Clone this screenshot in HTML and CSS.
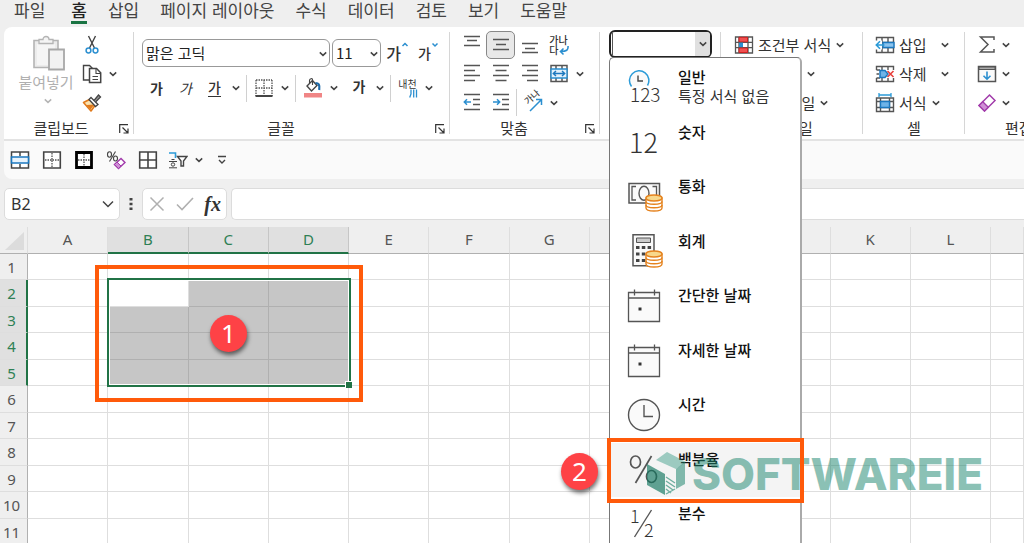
FILE: index.html
```html
<!DOCTYPE html>
<html lang="ko">
<head>
<meta charset="utf-8">
<meta name="viewport" content="width=device-width, initial-scale=1">
<title>통합 문서</title>
<link rel="stylesheet" href="styles.css">
</head>
<body>
<svg class="defs" aria-hidden="true">
  <symbol id="chev" viewBox="0 0 10 10"><path d="M1.8 3.4 5 6.4 8.2 3.4" fill="none" stroke="currentColor" stroke-width="1.5"/></symbol>
  <symbol id="launch" viewBox="0 0 10 10"><path d="M.7 9V.7H9M3.5 3.5 8.5 8.500M9 4.500V9H4.500" fill="none" stroke="currentColor" stroke-width="1.200"/></symbol>
  <symbol id="coins" viewBox="0 0 18 18"><path d="M1 4v10c0 4 16 4 16 0V4z" fill="#fff" stroke="#e5831f" stroke-width="1.400"/><path d="M1 7.500c0 3.700 16 3.700 16 0M1 11c0 3.700 16 3.700 16 0" fill="none" stroke="#e5831f" stroke-width="1.400"/><ellipse cx="9" cy="4" rx="8" ry="3" fill="#f8d88c" stroke="#e5831f" stroke-width="1.400"/></symbol>
  <symbol id="calendar" viewBox="0 0 34 36"><path d="M1.500 4.500h31v29h-31z" fill="#fafafa" stroke="#555" stroke-width="1.300"/><path d="M1.500 10h31M7.500 1.500v6M27.500 1.500v6" stroke="#555" stroke-width="1.300"/><path d="M11.500 19.500h3v3h-3z" fill="#333"/></symbol>
</svg>

<nav class="tabs">
  <button class="tab tab-file">파일</button>
  <button class="tab tab-active">홈</button>
  <button class="tab">삽입</button>
  <button class="tab">페이지 레이아웃</button>
  <button class="tab">수식</button>
  <button class="tab">데이터</button>
  <button class="tab">검토</button>
  <button class="tab">보기</button>
  <button class="tab">도움말</button>
</nav>

<header class="ribbon">
  <section class="group group-clip">
    <div class="clip-body">
      <button class="paste" disabled>
        <svg width="34" height="36" viewBox="0 0 34 36"><path d="M2 5.500h24v27H2z" fill="#ececec" stroke="#b4b4b4" stroke-width="1.600"/><path d="M5 9h18v21H5z" fill="#f5f5f5"/><path d="M7 8.500v-4h4c0-4 6-4 6 0h4v4z" fill="#f4f4f4" stroke="#b4b4b4" stroke-width="1.300"/><path d="M17 14.500h15v20H17z" fill="#f2f2f2" stroke="#a8a8a8" stroke-width="1.800"/></svg>
        <span>붙여넣기</span>
        <svg class="chev"><use href="#chev"/></svg>
      </button>
      <div class="rows">
        <div class="row">
          <button class="icon" aria-label="잘라내기"><svg width="20" height="20" viewBox="0 0 20 20"><path d="M6.500 1l6 12M13.500 1l-6 12" stroke="#444" stroke-width="1.400" fill="none"/><circle cx="6.500" cy="15.500" r="2.400" fill="none" stroke="#2b8fd0" stroke-width="1.500"/><circle cx="13.500" cy="15.500" r="2.400" fill="none" stroke="#2b8fd0" stroke-width="1.500"/></svg></button>
        </div>
        <div class="row">
          <button class="icon" aria-label="복사"><svg width="20" height="20" viewBox="0 0 20 20"><path d="M7 16H1.500V1.500h6l3 3" fill="none" stroke="#444" stroke-width="1.400"/><path d="M7.500 4.500h7l4.200 4.200v9.800H7.500z" fill="#fff" stroke="#444" stroke-width="1.500"/><path d="M14 4.500v5h5M10.500 12.500h5.500M10.500 15.500h5.500" fill="none" stroke="#444" stroke-width="1.100"/></svg></button>
          <button class="drop" aria-label="복사 옵션"><svg class="chev"><use href="#chev"/></svg></button>
        </div>
        <div class="row">
          <button class="icon" aria-label="서식 복사"><svg width="20" height="20" viewBox="0 0 20 20"><path d="M7.500 6.500 1.500 9.500l7.500 8.500 4-5.500z" fill="#fbe3b0" stroke="#e07a1c" stroke-width="1.600" stroke-linejoin="round"/><path d="M4.500 12l8-.5-4 5z" fill="#e07a1c"/><path d="M7 6.500l2-2 7 7-2.500 2z" fill="#fff" stroke="#444" stroke-width="1.300"/><path d="M12 7.500l4.500-5.500 2 2-5 5" fill="#999" stroke="#444" stroke-width="1.300"/></svg></button>
        </div>
      </div>
    </div>
    <footer class="caption">클립보드<button class="launcher" aria-label="클립보드 옵션"><svg width="10" height="10"><use href="#launch"/></svg></button></footer>
  </section>

  <section class="group group-font">
    <div class="font-body">
      <div class="row font-row">
        <label class="combo combo-font"><select aria-label="글꼴"><option>맑은 고딕</option></select><svg class="chev"><use href="#chev"/></svg></label>
        <label class="combo combo-size"><select aria-label="글꼴 크기"><option>11</option></select><svg class="chev"><use href="#chev"/></svg></label>
        <button class="icon glyph glyph-large" aria-label="글꼴 크게">가<svg width="8" height="12" viewBox="0 0 8 12"><path d="M1.500 5 4 2.500 6.500 5" fill="none" stroke="#2b8fd0" stroke-width="1.500"/></svg></button>
        <button class="icon glyph" aria-label="글꼴 작게">가<svg width="8" height="12" viewBox="0 0 8 12"><path d="M1.500 2.500 4 5 6.500 2.500" fill="none" stroke="#2b8fd0" stroke-width="1.500"/></svg></button>
      </div>
      <div class="row font-row">
        <button class="icon glyph bold" aria-label="굵게">가</button>
        <button class="icon glyph italic" aria-label="기울임꼴">가</button>
        <button class="icon glyph" aria-label="밑줄"><span class="underlined">가</span></button>
        <button class="drop" aria-label="밑줄 옵션"><svg class="chev"><use href="#chev"/></svg></button>
        <i class="sep"></i>
        <button class="icon" aria-label="테두리"><svg width="20" height="20" viewBox="0 0 20 20"><path d="M2 2h16M2 2v16M18 2v16M10 2v16M2 10h16" fill="none" stroke="#555" stroke-width="1.300" stroke-dasharray="1.500 1"/><path d="M1.500 18h17" stroke="#444" stroke-width="2"/></svg></button>
        <button class="drop" aria-label="테두리 옵션"><svg class="chev"><use href="#chev"/></svg></button>
        <i class="sep"></i>
        <button class="icon" aria-label="채우기 색"><svg width="20" height="20" viewBox="0 0 20 20"><path d="M9.500 2.500 4 8l4.500 5L14 7.500z" fill="#fff" stroke="#444" stroke-width="1.400"/><path d="M9.500 7V1.500c0-1.500-3-1-3 1V5" fill="none" stroke="#444" stroke-width="1.100"/><path d="M12.500 5c3 0 4.500 1.500 3.700 7" fill="none" stroke="#1c69a8" stroke-width="2.200"/><path d="M1 15h18v4.500H1z" fill="#f08585"/></svg></button>
        <button class="drop" aria-label="채우기 색 옵션"><svg class="chev"><use href="#chev"/></svg></button>
        <button class="icon glyph bold color-glyph" aria-label="글꼴 색">가</button>
        <button class="drop" aria-label="글꼴 색 옵션"><svg class="chev"><use href="#chev"/></svg></button>
        <i class="sep"></i>
        <button class="icon ruby" aria-label="윗주 필드"><span>내천</span><svg width="9" height="9" viewBox="0 0 9 9"><path d="M2 .5V5L.7 8.500M4.700.5v8M7.500.5v8" fill="none" stroke="#2b8fd0" stroke-width="1.300"/></svg></button>
        <button class="drop" aria-label="윗주 옵션"><svg class="chev"><use href="#chev"/></svg></button>
      </div>
    </div>
    <footer class="caption">글꼴<button class="launcher" aria-label="글꼴 옵션"><svg width="10" height="10"><use href="#launch"/></svg></button></footer>
  </section>

  <section class="group group-align">
    <div class="rows">
      <div class="row">
        <button class="icon" aria-label="위쪽 맞춤"><svg class="line" width="20" height="24" viewBox="0 0 20 24"><path d="M2 3.500h16M5 7.500h10M2 12.500h16"/></svg></button>
        <button class="icon pressed" aria-label="가운데 맞춤"><svg class="line" width="20" height="24" viewBox="0 0 20 24"><path d="M2 6.500h16M5 11.500h10M2 16.500h16"/></svg></button>
        <button class="icon" aria-label="아래쪽 맞춤"><svg class="line" width="20" height="24" viewBox="0 0 20 24"><path d="M2 10.500h16M5 15.500h10M2 19.500h16"/></svg></button>
        <button class="icon wrap" aria-label="자동 줄 바꿈"><span>가나<br>다</span><svg width="10" height="10" viewBox="0 0 10 10"><path d="M9 0c.5 4-1.500 5.500-7 5.500M4.500 2.500l-3 3 3 3" fill="none" stroke="#2b8fd0" stroke-width="1.600"/></svg></button>
      </div>
      <div class="row">
        <button class="icon" aria-label="왼쪽 맞춤"><svg class="line" width="20" height="20" viewBox="0 0 20 20"><path d="M2 1.500h16M2 6.500h11M2 11.500h16M2 16.500h11"/></svg></button>
        <button class="icon" aria-label="가운데 맞춤"><svg class="line" width="20" height="20" viewBox="0 0 20 20"><path d="M2 1.500h16M4.500 6.500h11M2 11.500h16M4.500 16.500h11"/></svg></button>
        <button class="icon" aria-label="오른쪽 맞춤"><svg class="line" width="20" height="20" viewBox="0 0 20 20"><path d="M2 1.500h16M7 6.500h11M2 11.500h16M7 16.500h11"/></svg></button>
        <button class="icon" aria-label="병합하고 가운데 맞춤"><svg width="20" height="20" viewBox="0 0 20 20"><path d="M2 1.500h16v16H2zM7 2v4M13 2v4M7 14v3M13 14v3" fill="none" stroke="#555" stroke-width="1.500"/><path d="M2 5h16v9H2z" fill="#e3f1fb" stroke="#2b8fd0" stroke-width="1.400"/><path d="M4.500 9.500h11M7 7 4.300 9.500 7 12M13 7l2.700 2.500L13 12" fill="none" stroke="#1c78be" stroke-width="1.400"/></svg></button>
        <button class="drop" aria-label="병합 옵션"><svg class="chev"><use href="#chev"/></svg></button>
      </div>
      <div class="row">
        <button class="icon" aria-label="내어쓰기"><svg class="line" width="20" height="20" viewBox="0 0 20 20"><path d="M2 1.500h16M11 6.500h7M11 11.500h7M2 16.500h16"/><path class="blue" d="M9 9H2.500M5 6.300 2.300 9 5 11.700"/></svg></button>
        <button class="icon" aria-label="들여쓰기"><svg class="line" width="20" height="20" viewBox="0 0 20 20"><path d="M2 1.500h16M11 6.500h7M11 11.500h7M2 16.500h16"/><path class="blue" d="M2 9h6.500M6 6.300 8.700 9 6 11.700"/></svg></button>
        <i class="sep sep-thin"></i>
        <button class="icon" aria-label="방향"><svg class="spill" width="22" height="20" viewBox="0 0 22 20"><text class="tilt" transform="translate(6 12) rotate(-42)">가나</text><path d="M8 18 19 7M14 6.500h5.500V12" fill="none" stroke="#2b8fd0" stroke-width="1.500"/></svg></button>
        <button class="drop" aria-label="방향 옵션"><svg class="chev"><use href="#chev"/></svg></button>
      </div>
    </div>
    <footer class="caption">맞춤<button class="launcher" aria-label="맞춤 옵션"><svg width="10" height="10"><use href="#launch"/></svg></button></footer>
  </section>

  <section class="group group-number">
    <div class="format">
      <input class="format-input" aria-label="표시 형식" type="text">
      <button class="format-drop" aria-label="표시 형식 목록"><svg class="chev"><use href="#chev"/></svg></button>
      <div class="menu">
        <button class="item"><svg width="36" height="36" viewBox="0 0 36 36"><path d="M4.500 16.500a9.700 9.700 0 1 1 16-1" fill="#fafafa" stroke="#2b9bd8" stroke-width="1.500"/><path d="M11 5.500v5.500h5" fill="none" stroke="#444" stroke-width="1.400"/><text class="num-small" x="3" y="32">123</text></svg><span><b>일반</b>특정 서식 없음</span></button>
        <button class="item"><svg width="36" height="36" viewBox="0 0 36 36"><text class="num-big" x="2" y="28">12</text></svg><span><b>숫자</b></span></button>
        <button class="item"><svg width="36" height="36" viewBox="0 0 36 36"><path d="M2 4.500h30.500v19.500H2z" fill="#fafafa" stroke="#555" stroke-width="1.500"/><path d="M9 7.500H5v13.500h4M25.500 7.500h4V17" fill="none" stroke="#555" stroke-width="1.300"/><ellipse cx="17" cy="14.300" rx="5" ry="7" fill="none" stroke="#555" stroke-width="1.400"/><use href="#coins" x="18" y="15" width="18" height="18"/></svg><span><b>통화</b></span></button>
        <button class="item"><svg width="36" height="36" viewBox="0 0 36 36"><path d="M6 .8h21v31H6z" fill="#fafafa" stroke="#555" stroke-width="1.500"/><path d="M9.500 4h14v4.500h-14z" fill="#ccc" stroke="#555"/><path d="M9 12h3.500v3H9zM14.800 12h3.500v3h-3.500zM20.600 12h3.500v3h-3.500zM9 18.500h3.500v3H9zM14.800 18.500h3.500v3h-3.500zM9 25h3.500v3H9zM14.800 25h3.500v3h-3.500z" fill="#444"/><use href="#coins" x="18" y="16" width="18" height="18"/></svg><span><b>회계</b></span></button>
        <button class="item"><svg width="36" height="36"><use href="#calendar" width="34" height="36"/></svg><span><b>간단한 날짜</b></span></button>
        <button class="item"><svg width="36" height="36"><use href="#calendar" width="34" height="36"/></svg><span><b>자세한 날짜</b></span></button>
        <button class="item"><svg width="36" height="36" viewBox="0 0 36 36"><circle cx="17" cy="18" r="15.500" fill="#fafafa" stroke="#555" stroke-width="1.400"/><path d="M17 8v11.500h9" fill="none" stroke="#555" stroke-width="1.400"/></svg><span><b>시간</b></span></button>
        <button class="item item-hover"><svg width="36" height="36" viewBox="0 0 36 36"><ellipse cx="8.500" cy="10" rx="5" ry="6" fill="none" stroke="#555" stroke-width="1.700"/><ellipse cx="24.500" cy="24.500" rx="5" ry="6" fill="none" stroke="#555" stroke-width="1.700"/><path d="M24.500 4 8.500 31" stroke="#555" stroke-width="1.700"/></svg><span><b>백분율</b></span></button>
        <button class="item"><svg width="36" height="36" viewBox="0 0 36 36"><path d="M24.500 4 7.500 31" stroke="#555" stroke-width="1.400"/><text class="num-frac" x="3" y="17">1</text><text class="num-frac" x="17" y="31">2</text></svg><span><b>분수</b></span></button>
      </div>
    </div>
    <footer class="caption">표시 형식</footer>
  </section>

  <section class="group group-style">
    <div class="rows">
      <button class="row command"><svg width="20" height="20" viewBox="0 0 20 20"><path d="M1.500 2h17v16h-17zM1.500 7.300h17M1.500 12.600h17M5 2v16M14 2v16" fill="#fff" stroke="#555" stroke-width="1.300"/><path d="M5 2.300h8.500v4.500H5zM5 13h8.500v4.500H5z" fill="#f05050" stroke="#d02020"/><path d="M5 7.600h4v4.500H5z" fill="#2b8fd0"/></svg>조건부 서식<svg class="chev"><use href="#chev"/></svg></button>
      <button class="row command command-table">표 서식<svg class="chev"><use href="#chev"/></svg></button>
      <button class="row command command-cell">셀 스타일<svg class="chev"><use href="#chev"/></svg></button>
    </div>
    <footer class="caption">스타일</footer>
  </section>

  <section class="group group-cell">
    <div class="rows">
      <div class="row"><button class="command"><svg width="20" height="20" viewBox="0 0 20 20"><path d="M1.500 2.500h17v15h-17zM1.500 7.500h17M1.500 12.500h17M7 2.500v15M13 2.500v15" fill="#fff" stroke="#555" stroke-width="1.400"/><path d="M8 7.500h11v5H8z" fill="#8cc4ee" stroke="#1c78be" stroke-width="1.400"/><path d="M0 5.500h7v9H0z" fill="#fff"/><path d="M9.500 10H1.500M5 6.300 1.300 10 5 13.700" fill="none" stroke="#2b9bd8" stroke-width="1.600"/></svg>삽입</button><button class="drop drop-wide" aria-label="삽입 옵션"><svg class="chev"><use href="#chev"/></svg></button></div>
      <div class="row"><button class="command"><svg width="20" height="20" viewBox="0 0 20 20"><path d="M1.500 6V2.500h17V6M7 2.500V6M13 2.500V6M1.500 14v3.500h17V14M7 14v3.500M13 14v3.500M1.500 6H5M1.500 14H5M1.500 10H4" fill="none" stroke="#555" stroke-width="1.400"/><path d="M5 6.500h5l3 3.500-3 3.500H5z" fill="#6fb4e8" stroke="#1c78be" stroke-width="1.500"/><path d="M12.500 7l6 6M18.500 7l-6 6" stroke="#e8403c" stroke-width="1.600"/></svg>삭제</button><button class="drop drop-wide" aria-label="삭제 옵션"><svg class="chev"><use href="#chev"/></svg></button></div>
      <div class="row"><button class="command"><svg width="20" height="20" viewBox="0 0 20 20"><path d="M1.500 5h17v13.500h-17zM1.500 8.500h17M1.500 14.500h17M5.500 5v13.500M14.500 5v13.500" fill="#fff" stroke="#555" stroke-width="1.400"/><path d="M5.500 8.500h9v6h-9z" fill="#6fb4e8" stroke="#1c78be" stroke-width="1.400"/><path d="M4 2h12M4 0v4M16 0v4" stroke="#2b9bd8" stroke-width="1.300"/></svg>서식<svg class="chev"><use href="#chev"/></svg></button></div>
    </div>
    <footer class="caption">셀</footer>
  </section>

  <section class="group group-edit">
    <div class="rows">
      <button class="row command" aria-label="합계"><svg width="20" height="20" viewBox="0 0 20 20"><path d="M17 5V2H3.500L11 9.500 3.500 17H17v-3" fill="none" stroke="#555" stroke-width="1.500"/></svg><svg class="chev"><use href="#chev"/></svg></button>
      <button class="row command" aria-label="채우기"><svg width="20" height="20" viewBox="0 0 20 20"><path d="M1.500 2.500h17v15h-17z" fill="#fafafa" stroke="#555" stroke-width="1.500"/><path d="M2 3h16v2.500H2z" fill="#aaa" stroke="#555"/><path d="M10 7.500V15M6.500 11.700 10 15.200l3.500-3.500" fill="none" stroke="#2b8fd0" stroke-width="1.600"/></svg><svg class="chev"><use href="#chev"/></svg></button>
      <button class="row command" aria-label="지우기"><svg width="20" height="20" viewBox="0 0 20 20"><path d="M12.500 2 18 7.500 7.500 18 2 12.500z" fill="#fff" stroke="#a23cab" stroke-width="1.500"/><path d="M5.800 8.700l5.500 5.500L7.500 18 2 12.500z" fill="#cf8fd6" stroke="#a23cab" stroke-width="1.300"/></svg><svg class="chev"><use href="#chev"/></svg></button>
    </div>
    <footer class="caption">편집</footer>
  </section>
</header>

<div class="quick">
  <button class="quick-btn" aria-label="병합"><svg width="20" height="20" viewBox="0 0 20 20"><path d="M1.500 2h17v16h-17zM10 2v4M10 14v4" fill="#fff" stroke="#444" stroke-width="1.500"/><path d="M1.500 7h17v6h-17z" fill="#e8f3fc" stroke="#1c78be" stroke-width="1.600"/></svg></button>
  <button class="quick-btn" aria-label="바깥쪽 테두리"><svg width="20" height="20" viewBox="0 0 20 20"><path d="M1.700 2h16.600v16H1.700z" fill="#fff" stroke="#444" stroke-width="1.600"/><path d="M10 3v14M3 10h14" stroke="#555" stroke-width="1.300" stroke-dasharray="1.500 1"/></svg></button>
  <button class="quick-btn" aria-label="굵은 바깥쪽 테두리"><svg width="20" height="20" viewBox="0 0 20 20"><path d="M2.500 2.500h15v15h-15z" fill="#fff" stroke="#000" stroke-width="2.800"/><path d="M10 4v12M4 10h12" stroke="#555" stroke-width="1.300" stroke-dasharray="1.500 1"/></svg></button>
  <button class="quick-btn" aria-label="서식 지우기"><svg width="20" height="20" viewBox="0 0 20 20"><ellipse cx="3.500" cy="4.500" rx="2" ry="2.700" fill="none" stroke="#444" stroke-width="1.100"/><ellipse cx="9.500" cy="8.500" rx="2" ry="2.500" fill="none" stroke="#444" stroke-width="1.100"/><path d="M9.500 1.500 3.500 11.500" stroke="#444" stroke-width="1.100"/><path d="M15 8.500l4 4-6.500 6-4-4z" fill="#fff" stroke="#a23cab" stroke-width="1.500"/><path d="M11 12l4 4-2.500 2.500-4-4z" fill="#cf8fd6" stroke="#a23cab"/></svg></button>
  <button class="quick-btn" aria-label="모든 테두리"><svg width="20" height="20" viewBox="0 0 20 20"><path d="M1.700 2h16.600v16H1.700zM10 2v16M1.700 10h16.600" fill="#fff" stroke="#444" stroke-width="1.600"/></svg></button>
  <button class="quick-btn quick-filter" aria-label="필터"><svg width="20" height="20" viewBox="0 0 20 20"><path d="M1 3h6.500v5" fill="none" stroke="#2b9bd8" stroke-width="1.600"/><path d="M9.500 6.500h9.500l-3.500 4.500v5h-2.500v-5z" fill="#fff" stroke="#444" stroke-width="1.400"/><path d="M3.500 9.500h3M1 11.500h8M1 17.800h8" stroke="#444" stroke-width="1"/><circle cx="5" cy="14.500" r="1.700" fill="none" stroke="#444"/></svg></button>
  <button class="drop" aria-label="필터 옵션"><svg class="chev"><use href="#chev"/></svg></button>
  <button class="quick-btn" aria-label="빠른 실행 도구 모음 사용자 지정"><svg width="10" height="10" viewBox="0 0 10 10"><path d="M1 1.500h8M2 5l3 3 3-3" fill="none" stroke="#444" stroke-width="1.400"/></svg></button>
</div>

<div class="formula">
  <div class="namebox"><input aria-label="이름 상자" type="text" value="B2"><button aria-label="이름 목록"><svg width="12" height="8" viewBox="0 0 12 8"><path d="M1 1.500l5 5 5-5" fill="none" stroke="#444" stroke-width="1.500"/></svg></button></div>
  <svg class="grip" width="4" height="14" viewBox="0 0 4 14"><path d="M.5 1h3v2.500h-3zM.5 5.700h3v2.500h-3zM.5 10.500h3V13h-3z" fill="#444"/></svg>
  <div class="fx">
    <button aria-label="취소"><svg width="16" height="16" viewBox="0 0 16 16"><path d="M1.500 1.500l13 13M14.500 1.500l-13 13" stroke="#b0b0b0" stroke-width="1.500"/></svg></button>
    <button aria-label="입력"><svg width="18" height="16" viewBox="0 0 18 16"><path d="M1 8.500l5 5L17 2" fill="none" stroke="#b0b0b0" stroke-width="1.600"/></svg></button>
    <button class="fx-label" aria-label="함수 삽입">fx</button>
  </div>
  <input class="formula-input" aria-label="수식 입력줄" type="text">
</div>

<table class="sheet">
  <colgroup><col class="col-head"><col><col><col><col><col><col><col><col><col><col><col><col><col class="col-last"></colgroup>
  <thead>
    <tr><th class="corner"><svg width="20" height="20" viewBox="0 0 20 20"><path d="M19 1v18H0z" fill="#dcdcdc"/></svg></th><th>A</th><th class="on">B</th><th class="on">C</th><th class="on">D</th><th>E</th><th>F</th><th>G</th><th>H</th><th>I</th><th>J</th><th>K</th><th>L</th><th></th></tr>
  </thead>
  <tbody>
    <tr><th>1</th><td></td><td></td><td></td><td></td><td></td><td></td><td></td><td></td><td></td><td></td><td></td><td></td><td></td></tr>
    <tr><th class="on">2</th><td></td><td class="active"><div class="selection"></div></td><td class="sel"></td><td class="sel"></td><td></td><td></td><td></td><td></td><td></td><td></td><td></td><td></td><td></td></tr>
    <tr><th class="on">3</th><td></td><td class="sel"></td><td class="sel"></td><td class="sel"></td><td></td><td></td><td></td><td></td><td></td><td></td><td></td><td></td><td></td></tr>
    <tr><th class="on">4</th><td></td><td class="sel"></td><td class="sel"></td><td class="sel"></td><td></td><td></td><td></td><td></td><td></td><td></td><td></td><td></td><td></td></tr>
    <tr><th class="on">5</th><td></td><td class="sel"></td><td class="sel"></td><td class="sel"></td><td></td><td></td><td></td><td></td><td></td><td></td><td></td><td></td><td></td></tr>
    <tr><th>6</th><td></td><td></td><td></td><td></td><td></td><td></td><td></td><td></td><td></td><td></td><td></td><td></td><td></td></tr>
    <tr><th>7</th><td></td><td></td><td></td><td></td><td></td><td></td><td></td><td></td><td></td><td></td><td></td><td></td><td></td></tr>
    <tr><th>8</th><td></td><td></td><td></td><td></td><td></td><td></td><td></td><td></td><td></td><td></td><td></td><td></td><td></td></tr>
    <tr><th>9</th><td></td><td></td><td></td><td></td><td></td><td></td><td></td><td></td><td></td><td></td><td></td><td></td><td></td></tr>
    <tr><th>10</th><td></td><td></td><td></td><td></td><td></td><td></td><td></td><td></td><td></td><td></td><td></td><td></td><td></td></tr>
    <tr><th>11</th><td></td><td></td><td></td><td></td><td></td><td></td><td></td><td></td><td></td><td></td><td></td><td></td><td></td></tr>
  </tbody>
</table>

<div class="watermark">
  <svg width="44" height="46" viewBox="0 0 44 46"><path d="M22 1 41 11 31 18 11 9z" fill="#219078" fill-opacity=".42"/><path d="M2 13l18 10v21L2 34z" fill="#12775f" fill-opacity=".66"/><path d="M31 18l9-7v22l-9 5z" fill="#168067" fill-opacity=".52"/><path d="M21 26l9 6M21 30l9 6M21 34l7 5M21 38l5 4M21 43l9-5" stroke="#168067" stroke-opacity=".6" stroke-width="1.400" fill="none"/></svg>
  <span>SOFTWAREIE</span>
</div>
<div class="mark mark-range"></div>
<div class="mark mark-item"></div>
<div class="badge badge-one">1</div>
<div class="badge badge-two">2</div>
</body>
</html>
```
FILE: styles.css
```css
* { box-sizing: border-box; }

body {
  margin: 0;
  height: 100vh;
  overflow: hidden;
  position: relative;
  background: #efefef;
  color: #333;
  font: 15px/20px "Noto Sans CJK KR", sans-serif;
}

button, input, select {
  font: inherit;
  color: inherit;
  margin: 0;
  padding: 0;
  border: 0;
  background: none;
}

svg { display: block; flex: none; }
.defs { position: absolute; width: 0; height: 0; }
.chev { width: 10px; height: 10px; color: #444; }
.spill { overflow: visible; }

/* Ribbon tabs */
.tabs {
  display: flex;
  gap: 21px;
  height: 27px;
  padding-left: 14px;
  font-size: 17px;
}
.tab { height: 24px; padding-bottom: 4px; line-height: 20px; white-space: nowrap; color: #444; }
.tab-file { margin-right: 5px; }
.tab-active { border-bottom: 3px solid #1a7443; padding-bottom: 1px; color: #222; font-weight: 500; }

/* Ribbon groups */
.ribbon {
  display: flex;
  margin-left: 4px;
  height: 114px;
  background: #fff;
  border-bottom: 2px solid #e3e3e3;
  border-top-left-radius: 8px;
}
.group {
  position: relative;
  flex: none;
  display: flex;
  flex-direction: column;
  justify-content: space-between;
  padding-top: 3px;
}
.group::after {
  content: "";
  position: absolute;
  right: 0;
  top: 5px;
  bottom: 5px;
  width: 1px;
  background: #d6d6d6;
}
.group-clip { width: 130px; }
.group-font { width: 316px; }
.group-align { width: 150px; }
.group-number { width: 121px; }
.group-style { width: 142px; }
.group-cell { width: 102px; }
.group-edit { flex: 1; min-width: 0; overflow: hidden; }
.group-edit::after { display: none; }
.caption { height: 22px; line-height: 22px; text-align: center; position: relative; white-space: nowrap; }
.group-clip .caption { padding-right: 16px; }
.group-font .caption { padding-right: 22px; }
.group-align .caption { padding-right: 22px; }
.launcher { position: absolute; right: 5px; top: 7px; }
.row { display: flex; align-items: center; height: 29px; }
.icon { width: 29px; height: 28px; display: flex; align-items: center; justify-content: center; }
.drop { width: 14px; height: 28px; display: flex; align-items: center; justify-content: center; }
.sep { width: 6px; height: 27px; background: linear-gradient(#d0d0d0, #d0d0d0) center / 1px 100% no-repeat; }
.sep-thin { width: 3px; }
.line { fill: none; stroke: #555; stroke-width: 1.500; }
.line .blue { stroke: #2b8fd0; }
.command { display: flex; align-items: center; gap: 4px; white-space: nowrap; }

.clip-body { display: flex; padding-left: 12px; }
.paste { width: 60px; display: flex; flex-direction: column; align-items: center; padding-top: 5px; color: #b0b0b0; }
.paste svg:first-child { margin-left: 6px; }
.paste .chev { color: #b5b5b5; margin: 4px 0 0 4px; }
.paste span { margin-top: 1px; }
.clip-body .rows { padding-left: 1px; }

.font-body { padding: 8px 0 0 8px; }
.font-row { height: 36px; }
.font-row:first-child { height: 30px; margin-bottom: 2px; gap: 2px; }
.combo {
  position: relative;
  height: 28px;
  border: 1px solid #999;
  border-radius: 6px;
  background: #fff;
}
.combo select { appearance: none; width: 100%; height: 26px; padding-left: 3px; color: #222; outline: 0; }
.combo .chev { position: absolute; right: 1px; top: 9px; pointer-events: none; }
.combo-font { width: 188px; }
.combo-size { width: 49px; }
.glyph { font-size: 14px; font-weight: 500; }
.glyph svg { align-self: flex-start; margin-top: 2px; }
.glyph-large { font-size: 16px; }
.bold { font-weight: 700; }
.italic { font-style: italic; font-weight: 400; }
.underlined { border-bottom: 1px solid #333; line-height: 17px; }
.color-glyph { width: 36px; padding-bottom: 4px; margin-right: -4px; }
.ruby { flex-direction: column; font-size: 10px; line-height: 10px; }
.ruby svg { align-self: flex-end; margin-right: 4px; }

.group-align .rows { padding-left: 7px; }
.pressed { border: 1px solid #888; border-radius: 5px; background: #e8e8e8; }
.wrap { position: relative; font-size: 10px; font-weight: 500; line-height: 10px; text-align: left; }
.wrap svg { position: absolute; right: 4px; bottom: 3px; }
.tilt { font-size: 9px; font-weight: 500; fill: #444; }

/* Number format list */
.format {
  position: relative;
  display: flex;
  width: 103px;
  height: 28px;
  margin-left: 9px;
  border: 2px solid #222;
  border-radius: 6px;
  background: #fff;
}
.format-input { flex: 1; min-width: 0; outline: 0; margin: 1px 0 1px 1px; border-left: 1px solid #555; }
.format-drop { width: 15px; background: #e0e0e0; border-radius: 0 3px 3px 0; display: flex; align-items: center; justify-content: center; }
.menu {
  position: absolute;
  z-index: 2;
  left: -2px;
  top: 25px;
  width: 193px;
  padding-top: 3px;
  display: flex;
  flex-direction: column;
  background: #fff;
  border: 1px solid #777;
  border-right: 2px solid #aaa;
  border-radius: 5px;
}
.item {
  flex: none;
  height: 55px;
  display: flex;
  gap: 15px;
  padding: 6px 0 0 17px;
  text-align: left;
  line-height: 19px;
  white-space: nowrap;
}
.item:nth-child(even) { height: 54px; }
.item svg { margin-top: 3px; }
.item b { display: block; font-weight: 500; color: #111; }
.item-hover { background: #f4f4f4; }
.num-small { font-size: 19px; font-weight: 300; fill: #333; }
.num-big { font-size: 27px; font-weight: 300; fill: #333; }
.num-frac { font-size: 18px; font-weight: 300; fill: #333; }

.group-style .rows { padding-left: 13px; }
.command-table, .command-cell { padding-left: 22px; }
.group-cell .rows { padding-left: 12px; }
.drop-wide { width: 36px; }
.group-edit .rows { padding-left: 12px; }
.group-edit .caption { padding-left: 40px; text-align: left; }

/* Quick access bar */
.quick {
  display: flex;
  align-items: center;
  height: 38px;
  margin-left: 4px;
  background: #fafafa;
  border-bottom-left-radius: 8px;
}
.quick-btn { width: 32px; height: 28px; display: flex; align-items: center; justify-content: center; }
.quick-filter { width: 28px; }

/* Formula bar */
.formula { display: flex; height: 48px; padding: 9px 0 7px 4px; }
.namebox, .fx, .formula-input { height: 32px; border: 1px solid #dcdcdc; border-radius: 5px; background: #fff; }
.namebox { width: 116px; display: flex; align-items: center; padding: 0 5px 0 6px; font: 16px/20px "Noto Sans", sans-serif; }
.namebox input { flex: 1; min-width: 0; outline: 0; }
.grip { align-self: center; margin: 0 9px; }
.fx { width: 85px; display: flex; align-items: center; justify-content: space-between; padding: 0 5px 0 6px; }
.fx-label { font: italic bold 20px/24px "Liberation Serif", serif; color: #333; }
.formula-input { flex: 1; min-width: 0; margin-left: 4px; border-right: 0; border-radius: 5px 0 0 5px; outline: 0; }

/* Worksheet */
.sheet { width: 100%; table-layout: fixed; border-collapse: separate; border-spacing: 0; }
.col-head { width: 28px; }
.col-last { width: 33px; }
.sheet th, .sheet td { height: 26px; padding: 0; border: 0 solid #dedede; border-width: 0 1px 1px 0; }
.sheet tbody tr:nth-child(even) > * { height: 27px; }
.sheet th { font: 15px/20px "Noto Sans", sans-serif; color: #555; background: #efefef; }
.sheet thead th { height: 27px; border-bottom-color: #b0b0b0; padding-bottom: 2px; }
.sheet tbody th { border-right-color: #b0b0b0; padding-right: 4px; }
.sheet th.on { background: #e0e0e0; color: #2f8055; }
.sheet thead th.on { border-right-color: #c6c6c6; border-bottom: 2px solid #217346; padding-bottom: 1px; }
.sheet tbody th.on { border-right: 2px solid #217346; padding-right: 3px; }
.sheet .corner svg { margin: 4px 0 0 5px; }
.sheet td { background: #fff; position: relative; }
.sheet td.sel { background: #c6c6c6; border-color: #b0b0b0; }
.selection {
  position: absolute;
  z-index: 1;
  left: -1px;
  top: -2px;
  width: calc(300% + 6px);
  height: 109px;
  border: 2px solid #217346;
  box-shadow: inset 0 0 0 1px #fff;
}
.selection::after {
  content: "";
  position: absolute;
  right: -3px;
  bottom: -3px;
  width: 6px;
  height: 6px;
  background: #217346;
  border: 1px solid #fff;
  border-width: 1px 0 0 1px;
}

/* Annotations over the window */
.watermark {
  position: absolute;
  z-index: 3;
  left: 645px;
  top: 451px;
  display: flex;
  align-items: center;
  gap: 3px;
  font: 800 44px/46px Inter, sans-serif;
  color: rgba(24, 132, 108, .5);
}
.mark { position: absolute; z-index: 4; border: 4px solid #ff5a0a; }
.mark-range { left: 95px; top: 265px; width: 268px; height: 137px; }
.mark-item { left: 607px; top: 438px; width: 197px; height: 65px; }
.badge {
  position: absolute;
  z-index: 5;
  width: 37px;
  height: 37px;
  border-radius: 50%;
  background: #fe4246;
  color: #fff;
  font: 26px/37px "Noto Sans", sans-serif;
  text-align: center;
  box-shadow: 1px 3px 4px rgba(0, 0, 0, .55);
}
.badge-one { left: 210px; top: 315px; }
.badge-two { left: 561px; top: 453px; }
```
